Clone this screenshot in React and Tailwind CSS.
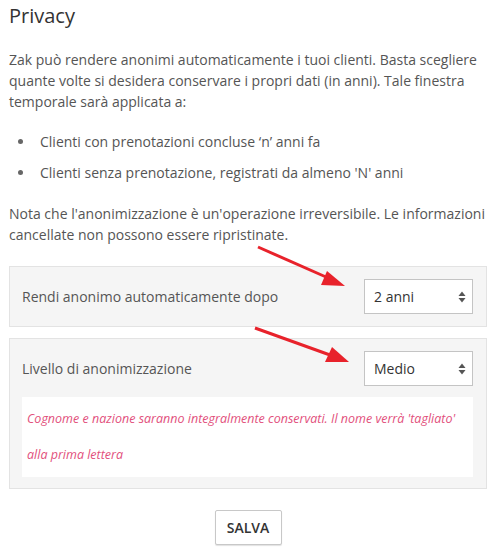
import React from "react";

const Caret = () => (
  <svg width="8" height="12" viewBox="0 0 8 12" className="text-[#555]">
    <path d="M4 0.5 L7.5 5 L0.5 5 Z" fill="currentColor" />
    <path d="M4 11.5 L7.5 7 L0.5 7 Z" fill="currentColor" />
  </svg>
);

const FakeSelect = ({ value }) => (
  <div className="flex h-[35px] w-[109px] shrink-0 items-center justify-between border border-[#c4c4c4] bg-white pl-[9px] pr-[6px] text-[14px] text-[#333]">
    <span>{value}</span>
    <Caret />
  </div>
);

const Arrows = () => (
  <svg
    className="pointer-events-none absolute left-0 top-0"
    width="501"
    height="558"
    viewBox="0 0 501 558"
  >
    {/* top arrow */}
    <line x1="258" y1="247" x2="326" y2="277" stroke="#e8222b" strokeWidth="3" />
    <path d="M345 286 L327 271 L321 285 Z" fill="#e8222b" />
    {/* bottom arrow */}
    <line x1="255" y1="328" x2="330" y2="355" stroke="#e8222b" strokeWidth="3" />
    <path d="M349 362 L332 347 L325 362 Z" fill="#e8222b" />
  </svg>
);

export default function App() {
  return (
    <div
      className="relative h-[558px] w-[501px] overflow-hidden bg-white pl-[9px] pr-[14px] text-[#555]"
      style={{ fontFamily: '"Open Sans", sans-serif' }}
    >
      <h1 className="pt-[4px] text-[20px] leading-[24px] text-[#333]">Privacy</h1>

      <p className="mt-[21px] text-[14px] leading-[21px]">
        Zak può rendere anonimi automaticamente i tuoi clienti. Basta scegliere
        quante volte si desidera conservare i propri dati (in anni). Tale finestra
        temporale sarà applicata a:
      </p>

      <ul className="mt-[19px] flex flex-col gap-[10px] text-[14px] leading-[21px]">
        <li className="flex items-center">
          <span className="ml-[9px] mr-[17px] h-[5px] w-[5px] rounded-full bg-[#666]" />
          Clienti con prenotazioni concluse ‘n’ anni fa
        </li>
        <li className="flex items-center">
          <span className="ml-[9px] mr-[17px] h-[5px] w-[5px] rounded-full bg-[#666]" />
          Clienti senza prenotazione, registrati da almeno 'N' anni
        </li>
      </ul>

      <p className="mt-[20px] text-[14px] leading-[21px]">
        Nota che l'anonimizzazione è un'operazione irreversibile. Le informazioni
        cancellate non possono essere ripristinate.
      </p>

      <div className="mt-[21px] flex items-center justify-between border border-[#e3e3e3] bg-[#f5f5f5] py-[12px] pl-[12px] pr-[13px]">
        <span className="text-[14px]">Rendi anonimo automaticamente dopo</span>
        <FakeSelect value="2 anni" />
      </div>

      <div className="mt-[11px] border border-[#e3e3e3] bg-[#f5f5f5] pb-[11px] pl-[12px] pr-[13px] pt-[12px]">
        <div className="flex items-center justify-between">
          <span className="text-[14px]">Livello di anonimizzazione</span>
          <FakeSelect value="Medio" />
        </div>
        <div className="mt-[11px] h-[80px] bg-white px-[5px] py-[4px] text-[12.5px] italic leading-[36px] text-[#e2507c]">
          Cognome e nazione saranno integralmente conservati. Il nome verrà 'tagliato'
          alla prima lettera
        </div>
      </div>

      <div className="mt-[21px] flex justify-center">
        <button className="h-[35px] w-[67px] rounded-[2px] border border-[#c8c8c8] bg-white text-[14px] font-semibold text-[#333] shadow-[0_1px_1px_rgba(0,0,0,0.12)]">
          SALVA
        </button>
      </div>

      <Arrows />
    </div>
  );
}
